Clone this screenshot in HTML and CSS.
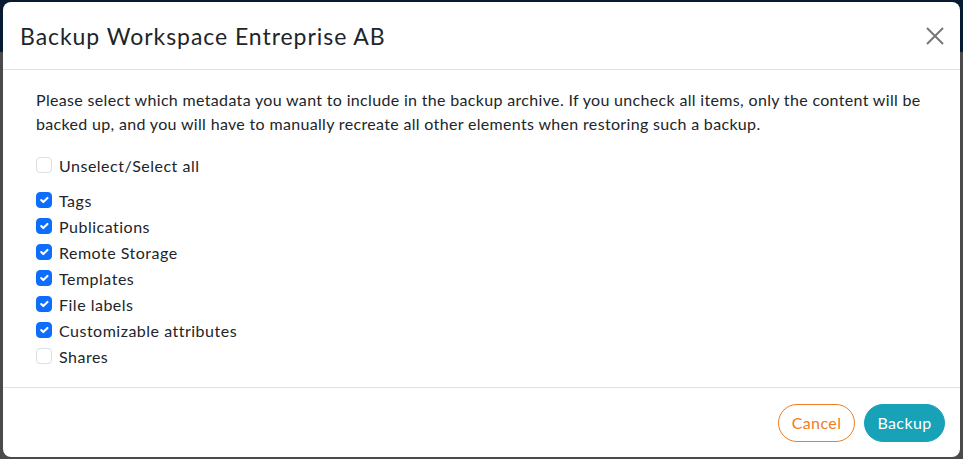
FILE: index.html
```html
<!DOCTYPE html>
<html>
<head>
<meta charset="utf-8">
<link rel="stylesheet" href="styles.css">
</head>
<body>
<div class="backdrop">
  <div class="top-strip"></div>
  <div class="modal">
    <div class="modal-header">
      <h5 class="modal-title">Backup Workspace Entreprise AB</h5>
      <button class="close" aria-label="Close">
        <svg width="18" height="18" viewBox="0 0 18 18"><path d="M1 1 L17 17 M17 1 L1 17" stroke="#777" stroke-width="2" fill="none"/></svg>
      </button>
    </div>
    <div class="modal-body">
      <p class="intro">Please select which metadata you want to include in the backup archive. If you uncheck all items, only the content will be backed up, and you will have to manually recreate all other elements when restoring such a backup.</p>
      <label class="check all"><span class="box"></span>Unselect/Select all</label>
      <div class="list">
        <label class="check"><span class="box on"></span>Tags</label>
        <label class="check"><span class="box on"></span>Publications</label>
        <label class="check"><span class="box on"></span>Remote Storage</label>
        <label class="check"><span class="box on"></span>Templates</label>
        <label class="check"><span class="box on"></span>File labels</label>
        <label class="check"><span class="box on"></span>Customizable attributes</label>
        <label class="check"><span class="box"></span>Shares</label>
      </div>
    </div>
    <div class="modal-footer">
      <button class="btn cancel">Cancel</button>
      <button class="btn primary">Backup</button>
    </div>
  </div>
</div>
</body>
</html>
```
FILE: styles.css
```css
html, body { margin: 0; padding: 0; }
body {
  width: 963px; height: 459px; overflow: hidden;
  background: #4a4a4a;
  font-family: "Lato", "Noto Sans", sans-serif;
  color: #212529;
}
.backdrop { position: relative; width: 963px; height: 459px; }
.top-strip { height: 52px; background: #071a30; }
.modal {
  position: absolute; left: 3px; top: 2px;
  width: 957px; height: 455px;
  background: #fff; border-radius: 8px;
  display: flex; flex-direction: column;
  box-sizing: border-box;
}
.modal-header {
  height: 68px; box-sizing: border-box;
  display: flex; align-items: center; justify-content: space-between;
  padding: 0 15px 0 17px;
  border-bottom: 1px solid #dee2e6;
}
.modal-title { margin: 0; font-size: 23px; font-weight: 400; color: #212529; letter-spacing: 0.95px; }
.close { background: none; border: 0; padding: 0; width: 20px; height: 20px; display: flex; align-items: center; justify-content: center; }
.modal-body { flex: 1; padding: 18px 30px 0 33px; }
.intro { margin: 0 0 16px; font-size: 16px; line-height: 24px; letter-spacing: 0.33px; color: #212529; }
.check { display: flex; align-items: center; height: 26px; font-size: 16px; letter-spacing: 0.5px; color: #212529; }
.check.all { margin-bottom: 9px; }
.box {
  width: 16px; height: 16px; box-sizing: border-box;
  border: 1px solid #dcdfe3; border-radius: 4px; margin-right: 7px;
  background: #fff; flex: none;
}
.box.on {
  background: #0d6efd; border-color: #0d6efd;
  background-image: url("data:image/svg+xml,%3csvg xmlns='http://www.w3.org/2000/svg' viewBox='0 0 20 20'%3e%3cpath fill='none' stroke='%23fff' stroke-linecap='round' stroke-linejoin='round' stroke-width='3' d='M6 10l3 3l6-6'/%3e%3c/svg%3e");
  background-size: 100% 100%;
}
.modal-footer {
  height: 70px; box-sizing: border-box;
  border-top: 1px solid #dee2e6;
  display: flex; align-items: center; justify-content: flex-end;
  padding: 0 15px 0 0; gap: 9px;
}
.btn {
  height: 38px; border-radius: 19px; font-family: inherit; font-size: 16px; letter-spacing: 0.4px;
  padding: 0; background: #fff;
}
.cancel { border: 1px solid #ef7d22; color: #ef7d22; width: 77px; }
.primary { border: 1px solid #17a2b8; background: #17a2b8; color: #fff; width: 81px; }
```
